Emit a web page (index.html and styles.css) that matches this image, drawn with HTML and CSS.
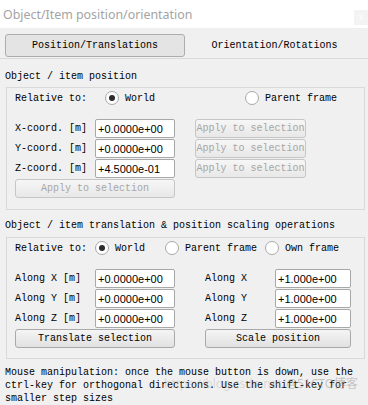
FILE: index.html
```html
<!DOCTYPE html>
<html lang="en">
<head>
    <meta charset="UTF-8">
    <meta name="viewport" content="width=device-width, initial-scale=1.0">
    <title>Object/Item position/orientation</title>
    <link rel="stylesheet" href="styles.css">
</head>
<body>
    <div class="titlebar">
        <span class="titlebar__text">Object/Item position/orientation</span>
        <span class="titlebar__close">x</span>
    </div>

    <div class="tabs">
        <button class="tab tab--active">Position/Translations</button>
        <button class="tab">Orientation/Rotations</button>
    </div>

    <div class="section-title section-title--first">Object / item position</div>
    <div class="group group--position">
        <div class="relative">
            <span class="relative__label relative__label--position">Relative to:</span>
            <label class="radio radio--world-position"><span class="radio__dot radio__dot--on"></span>World</label>
            <label class="radio"><span class="radio__dot"></span>Parent frame</label>
        </div>
        <div class="coords">
            <span class="field-label">X-coord. [m]</span>
            <input class="field" value="+0.0000e+00">
            <button class="btn btn--disabled btn--apply">Apply to selection</button>

            <span class="field-label">Y-coord. [m]</span>
            <input class="field" value="+0.0000e+00">
            <button class="btn btn--disabled btn--apply">Apply to selection</button>

            <span class="field-label">Z-coord. [m]</span>
            <input class="field" value="+4.5000e-01">
            <button class="btn btn--disabled btn--apply">Apply to selection</button>

            <button class="btn btn--disabled btn--left">Apply to selection</button>
        </div>
    </div>

    <div class="section-title section-title--second">Object / item translation &amp; position scaling operations</div>
    <div class="group group--scaling">
        <div class="relative">
            <span class="relative__label relative__label--scaling">Relative to:</span>
            <label class="radio radio--world-scaling"><span class="radio__dot radio__dot--on"></span>World</label>
            <label class="radio radio--parent-scaling"><span class="radio__dot"></span>Parent frame</label>
            <label class="radio"><span class="radio__dot"></span>Own frame</label>
        </div>
        <div class="ops">
            <span class="field-label">Along X [m]</span>
            <input class="field" value="+0.0000e+00">
            <span></span>
            <span class="field-label">Along X</span>
            <input class="field field--scale" value="+1.000e+00">

            <span class="field-label">Along Y [m]</span>
            <input class="field" value="+0.0000e+00">
            <span></span>
            <span class="field-label">Along Y</span>
            <input class="field field--scale" value="+1.000e+00">

            <span class="field-label">Along Z [m]</span>
            <input class="field" value="+0.0000e+00">
            <span></span>
            <span class="field-label">Along Z</span>
            <input class="field field--scale" value="+1.000e+00">

            <button class="btn btn--left">Translate selection</button>
            <button class="btn btn--right">Scale position</button>
        </div>
    </div>

    <div class="hint">Mouse manipulation: once the mouse button is down, use the ctrl-key for orthogonal directions. Use the shift-key for smaller step sizes</div>
    <div class="watermark">https://blog.csdn.net/<span class="watermark__brand">@51CTO博客</span></div>
</body>
</html>
```

FILE: styles.css
```css
html {
    box-sizing: border-box;
}
*, *::before, *::after {
    box-sizing: inherit;
}
body {
    margin: 0;
    width: 368px;
    height: 405px;
    overflow: hidden;
    position: relative;
    background: #f0f0f0;
    font-family: "Liberation Mono", "DejaVu Sans Mono", monospace;
    font-size: 10px;
    line-height: 13px;
    color: #000;
}

/* window title */
.titlebar {
    height: 28px;
    background: #fff;
    display: flex;
    align-items: center;
    justify-content: space-between;
    padding-left: 3px;
}
.titlebar__text {
    font-family: "Noto Sans", "Open Sans", sans-serif;
    font-size: 12.4px;
    color: #a4a4a4;
}
.titlebar__close {
    align-self: flex-start;
    margin-top: 10px;
    width: 14px;
    height: 15px;
    background: #f3f3f3;
    color: #fff;
    font-family: "Liberation Sans", sans-serif;
    font-size: 9px;
    line-height: 15px;
    text-align: center;
}

/* tabs */
.tabs {
    height: 31px;
    display: flex;
    padding: 6px 0 0 5px;
    border-bottom: 1px solid #dadada;
}
.tab {
    width: 180px;
    height: 23px;
    padding: 0;
    font: inherit;
    color: #000;
    background: none;
    border: 1px solid transparent;
}
.tab + .tab {
    width: 179px;
}
.tab--active {
    background: #e4e4e4;
    border-color: #adadad;
    border-radius: 3px;
}

/* sections */
.section-title {
    padding-left: 5px;
    white-space: nowrap;
}
.section-title--first {
    margin: 11px 0 4px;
}
.section-title--second {
    margin: 9px 0 5px;
}
.group {
    margin-left: 6px;
    width: 359px;
    border: 1px solid #d9d9d9;
    padding: 3px 8px 11px;
}
.group--scaling {
    padding-bottom: 10px;
}

.relative {
    height: 14px;
    display: flex;
    align-items: center;
    margin-bottom: 14px;
    white-space: nowrap;
}
.relative__label--position {
    width: 90px;
}
.relative__label--scaling {
    width: 80px;
}
.radio {
    display: flex;
    align-items: center;
    gap: 6px;
}
.radio--world-position {
    width: 140px;
}
.radio--world-scaling {
    width: 70px;
}
.radio--parent-scaling {
    width: 100px;
}
.radio__dot {
    width: 14px;
    height: 14px;
    border: 1px solid #a9a9a9;
    border-radius: 50%;
    background: #fff;
    display: flex;
    align-items: center;
    justify-content: center;
}
.radio__dot--on::after {
    content: "";
    width: 6px;
    height: 6px;
    border-radius: 50%;
    background: #2b2b2b;
}

/* field grids */
.coords {
    display: grid;
    grid-template-columns: 80px 80px 20px 111px;
    grid-auto-rows: 19px;
    row-gap: 1px;
}
.ops {
    display: grid;
    grid-template-columns: 80px 80px 30px 70px 76px;
    grid-auto-rows: 19px;
    row-gap: 1px;
}
.field-label {
    align-self: center;
    white-space: nowrap;
}
.field {
    width: 100%;
    height: 19px;
    margin: 0;
    padding: 0 2px;
    border: 1px solid #a8a8a8;
    border-radius: 2px;
    background: #fff;
    font-family: "Liberation Sans", Arial, sans-serif;
    font-size: 11px;
    color: #000;
}

.btn {
    height: 19px;
    padding: 0;
    font: inherit;
    color: #000;
    border: 1px solid #a9a9a9;
    border-radius: 3px;
    background: linear-gradient(#f5f5f5, #e1e1e1);
    white-space: nowrap;
}
.btn--disabled {
    color: #a6a6a6;
    border-color: #c6c6c6;
    background: linear-gradient(#f6f6f6, #e8e8e8);
}
.btn--apply {
    grid-column: 4;
}
.btn--left {
    grid-column: 1 / 3;
}
.btn--right {
    grid-column: 4 / 6;
}

.hint {
    margin-top: 7px;
    padding: 0 5px;
}

.watermark {
    position: absolute;
    left: 164px;
    top: 377px;
    font-family: "Noto Sans", "Noto Sans CJK SC", sans-serif;
    font-size: 12px;
    color: rgba(170, 170, 170, 0.35);
    white-space: nowrap;
}
.watermark__brand {
    color: rgba(150, 150, 150, 0.5);
}
```
